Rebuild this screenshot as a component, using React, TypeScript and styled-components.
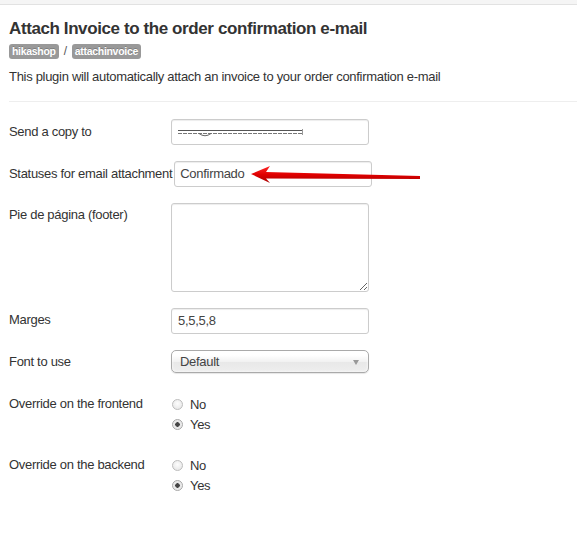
import styled, { createGlobalStyle } from 'styled-components';

const GlobalStyle = createGlobalStyle`
  body {
    margin: 0;
    background: #fff;
    font-family: "Liberation Sans", Arial, sans-serif;
    font-size: 13px;
    letter-spacing: -0.3px;
    color: #333;
  }
`;

type RadioOption = { label: string; checked: boolean };

const Redacted = () => (
  <svg width="128" height="10" viewBox="0 0 128 10">
    <path d="M1 3.5 H126" stroke="#555" strokeWidth="1" fill="none" />
    <path d="M1 6.5 H126" stroke="#777" strokeWidth="1" strokeDasharray="4 1" fill="none" />
    <path d="M22 6.5 Q28 11 34 6.5" stroke="#666" strokeWidth="1" fill="none" />
    <path d="M125.5 2 V8" stroke="#999" strokeWidth="1" />
  </svg>
);

const Arrow = () => (
  <ArrowSvg width="180" height="30" viewBox="0 0 180 30">
    <defs>
      <linearGradient id="shaft" x1="0" y1="0" x2="0" y2="1">
        <stop offset="0" stopColor="#ff2a2a" />
        <stop offset="0.5" stopColor="#e00000" />
        <stop offset="1" stopColor="#a80000" />
      </linearGradient>
    </defs>
    <path
      d="M6 14 L25 6 L21 12 L175 16 L175 19 L21 18.5 L25 23 Z"
      fill="url(#shaft)"
    />
  </ArrowSvg>
);

const RadioGroup = ({ name, options }: { name: string; options: RadioOption[] }) => (
  <Radios>
    {options.map((o) => (
      <RadioLine key={o.label}>
        <RadioInput type="radio" name={name} defaultChecked={o.checked} />
        {o.label}
      </RadioLine>
    ))}
  </Radios>
);

const App = () => {
  const yesNo = [
    { label: 'No', checked: false },
    { label: 'Yes', checked: true },
  ];

  return (
    <Page>
      <GlobalStyle />
      <TopBar />
      <Content>
        <Title>Attach Invoice to the order confirmation e-mail</Title>
        <Badges>
          <Badge>hikashop</Badge>
          <Slash>/</Slash>
          <Badge>attachinvoice</Badge>
        </Badges>
        <Description>
          This plugin will automatically attach an invoice to your order confirmation e-mail
        </Description>
        <Divider />
        <Form>
          <Row>
            <Label>Send a copy to</Label>
            <TextBox>
              <Redacted />
            </TextBox>
          </Row>
          <Row>
            <Label>Statuses for email attachment</Label>
            <TextBox>Confirmado</TextBox>
          </Row>
          <Row>
            <Label $top={3}>Pie de página (footer)</Label>
            <TextArea />
          </Row>
          <Row>
            <Label $top={3}>Marges</Label>
            <TextBox $pad={6}>5,5,5,8</TextBox>
          </Row>
          <Row>
            <Label $top={3}>Font to use</Label>
            <Select>
              Default
              <Caret />
            </Select>
          </Row>
          <RadioRow>
            <Label $top={1}>Override on the frontend</Label>
            <RadioGroup name="front" options={yesNo} />
          </RadioRow>
          <RadioRow>
            <Label $top={1}>Override on the backend</Label>
            <RadioGroup name="back" options={yesNo} />
          </RadioRow>
        </Form>
      </Content>
      <Arrow />
    </Page>
  );
};

const Page = styled.div`
  position: relative;
  width: 577px;
  min-height: 539px;
  overflow: hidden;
`;

const TopBar = styled.div`
  height: 4px;
  background: #f5f5f5;
  border-bottom: 1px solid #e2e2e2;
`;

const Content = styled.div`
  padding: 0 0 0 9px;
`;

const Title = styled.h2`
  margin: 14px 0 0;
  font-size: 17px;
  line-height: 20px;
  font-weight: bold;
  letter-spacing: -0.4px;
  color: #333;
`;

const Badges = styled.div`
  display: flex;
  align-items: center;
  margin-top: 5px;
  height: 15px;
`;

const Badge = styled.span`
  display: inline-block;
  height: 15px;
  line-height: 15px;
  padding: 0 3px;
  border-radius: 3px;
  background: #999;
  color: #fff;
  font-size: 10.5px;
  font-weight: bold;
  letter-spacing: -0.3px;
  text-shadow: 0 -1px 0 rgba(0, 0, 0, 0.2);
`;

const Slash = styled.span`
  margin: 0 5px 0 5px;
  font-size: 12px;
  color: #555;
  line-height: 15px;
`;

const Description = styled.p`
  margin: 9px 0 0;
  line-height: 18px;
`;

const Divider = styled.div`
  margin-top: 15px;
  border-top: 1px solid #eee;
`;

const Form = styled.div`
  padding-top: 17px;
`;

const Row = styled.div`
  display: flex;
  align-items: flex-start;
  margin-bottom: 16px;
`;

const RadioRow = styled(Row)`
  padding-top: 5px;
`;

const Label = styled.div<{ $top?: number }>`
  min-width: 160px;
  padding-right: 2px;
  padding-top: ${(p) => (p.$top ?? 4)}px;
  line-height: 18px;
  white-space: nowrap;
`;

const fieldBase = `
  box-sizing: border-box;
  width: 198px;
  border: 1px solid #ccc;
  border-radius: 3px;
  background: #fff;
  box-shadow: inset 0 1px 1px rgba(0, 0, 0, 0.075);
`;

const TextBox = styled.div<{ $pad?: number }>`
  ${fieldBase}
  display: flex;
  align-items: center;
  height: 26px;
  padding: 0 ${(p) => p.$pad ?? 5}px;
  color: #444;
  line-height: 18px;
`;

const TextArea = styled.textarea`
  ${fieldBase}
  height: 89px;
  margin: 0;
  resize: vertical;
  font-family: inherit;
  font-size: 13px;
`;

const Select = styled.div`
  position: relative;
  box-sizing: border-box;
  width: 198px;
  height: 23px;
  padding: 0 8px;
  display: flex;
  align-items: center;
  border: 1px solid #aaa;
  border-radius: 5px;
  background: linear-gradient(#fff 20%, #f2f2f2 50%, #e8e8e8 52%, #eee 100%);
  box-shadow: 0 0 3px #fff inset, 0 1px 1px rgba(0, 0, 0, 0.1);
  color: #444;
`;

const Caret = styled.span`
  position: absolute;
  right: 9px;
  top: 9px;
  width: 0;
  height: 0;
  border-left: 3px solid transparent;
  border-right: 3px solid transparent;
  border-top: 5px solid #999;
`;

const Radios = styled.div`
  display: flex;
  flex-direction: column;
`;

const RadioLine = styled.label`
  display: flex;
  align-items: center;
  height: 20px;
  color: #333;
`;

const RadioInput = styled.input`
  appearance: none;
  box-sizing: border-box;
  width: 11px;
  height: 11px;
  margin: 0 7px 0 1px;
  border: 1px solid #bdbdbd;
  border-radius: 50%;
  background: radial-gradient(circle at 50% 40%, #fdfdfd, #e2e2e2);

  &:checked {
    background: radial-gradient(circle, #444 0 2px, #e4e4e4 2.5px, #f4f4f4 100%);
    border-color: #a8a8a8;
  }
`;

const ArrowSvg = styled.svg`
  position: absolute;
  left: 245px;
  top: 160px;
  pointer-events: none;
`;

export default App;
